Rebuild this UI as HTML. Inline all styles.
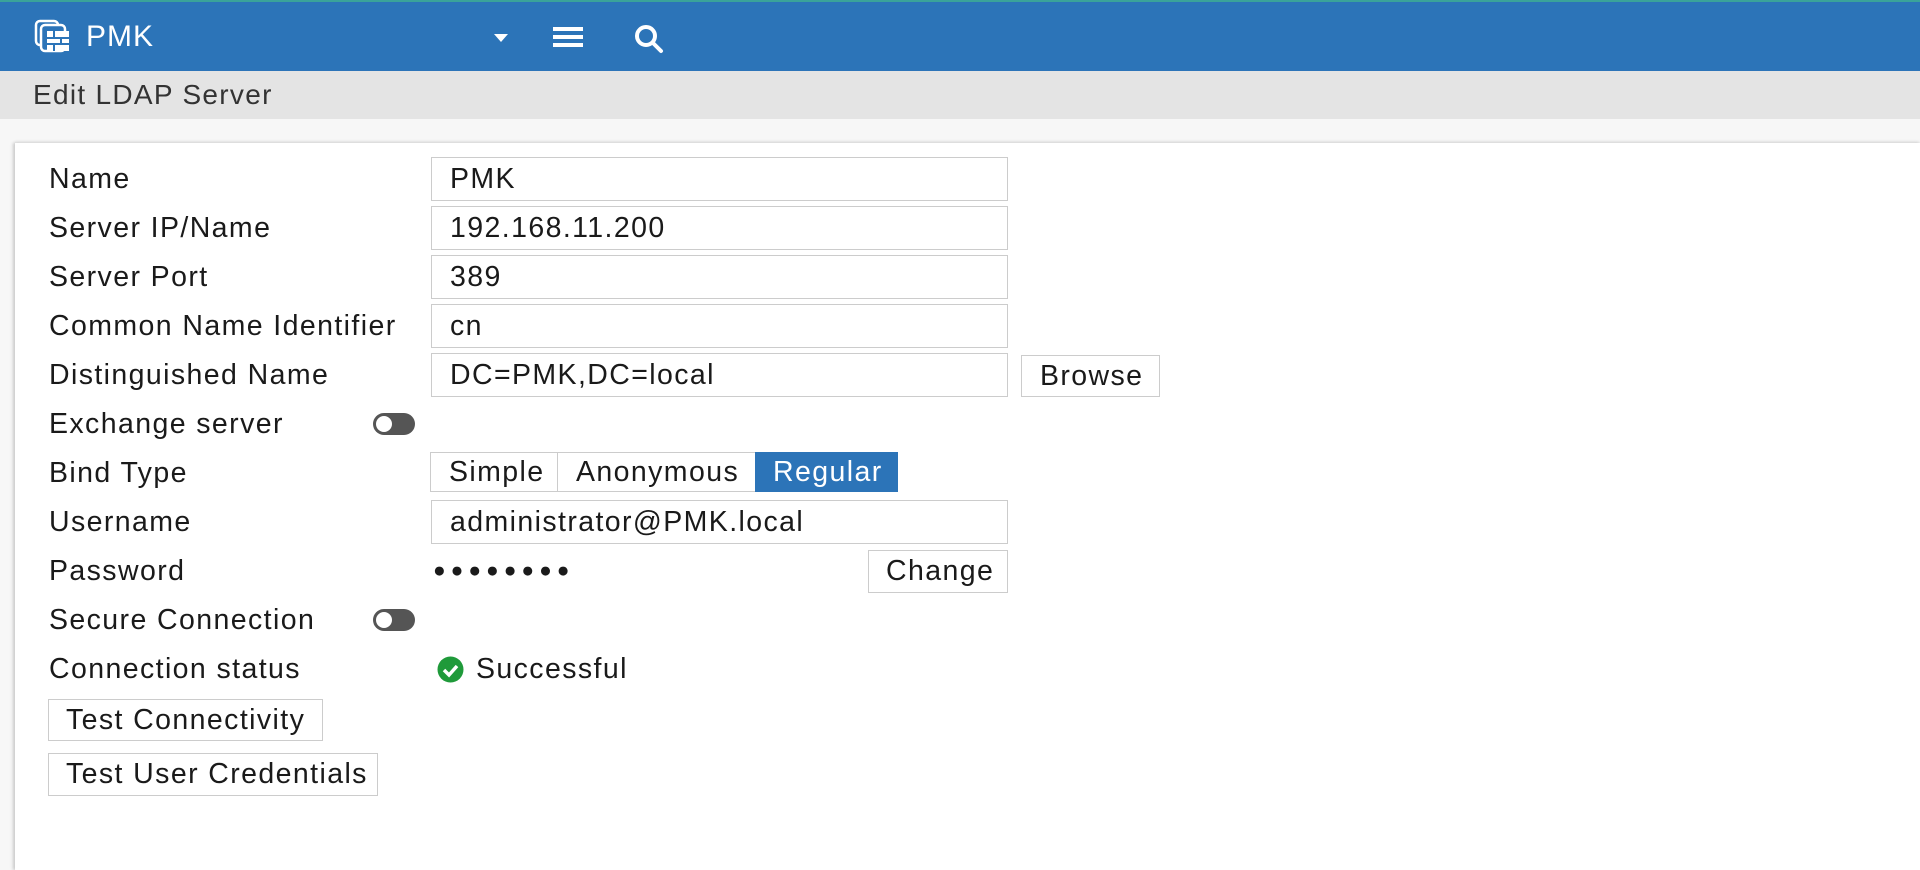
<!DOCTYPE html>
<html><head><meta charset="utf-8"><style>
*{box-sizing:border-box;margin:0;padding:0}
body{width:1920px;height:870px;overflow:hidden;background:#f7f7f7;font-family:"Liberation Sans",sans-serif;color:#1a1a1a;position:relative}
.top{position:absolute;left:0;top:0;width:1920px;height:71px;background:#2c74b8;border-top:2px solid #3aa39a}
.sub{position:absolute;left:0;top:71px;width:1920px;height:48px;background:#e4e4e4;font-size:28px;letter-spacing:1.3px;line-height:48px;padding-left:33px;color:#333}
.panel{position:absolute;left:15px;top:143px;width:1905px;height:727px;background:#fff;box-shadow:-2px 0 3px #ccc, 0 -1px 3px #ddd}
.a,.inp,.btn{font-size:28.5px;letter-spacing:1.4px}
.a{position:absolute;line-height:44px;white-space:nowrap}
.lbl{left:49px}
.inp{position:absolute;left:431px;width:577px;height:44px;border:1px solid #ccc;background:#fff;line-height:42px;padding-left:18px;white-space:nowrap}
.btn{position:absolute;border:1px solid #ccc;background:#fff;text-align:left;color:#1a1a1a;white-space:nowrap}
.tog{position:absolute;left:373px;width:42px;height:22px;border-radius:11px;background:#555}
.tog:after{content:"";position:absolute;left:3px;top:3px;width:16px;height:16px;border-radius:50%;background:#fff}
</style></head><body>
<div class="top">
<svg style="position:absolute;left:34px;top:17px" width="42" height="36" viewBox="0 0 42 36" fill="none" stroke="#fff" stroke-width="2.5"><rect x="2" y="2" width="22" height="24" rx="4"/><rect x="7" y="6" width="24" height="26" rx="4" fill="#2c74b8"/><rect x="13" y="12" width="22" height="20" fill="#fff" stroke="none"/><path d="M13 19h22M13 25h22M20 12v7M27 19v6M20 25v7" stroke="#2c74b8" stroke-width="2"/></svg>
<div style="position:absolute;left:86px;top:0;line-height:69px;font-size:30px;letter-spacing:1px;color:#fff">PMK</div>
<svg style="position:absolute;left:494px;top:32px" width="14" height="8"><path d="M0 0h14L7 8z" fill="#fff"/></svg>
<svg style="position:absolute;left:553px;top:24px" width="30" height="22"><path d="M0 3h30M0 11h30M0 19h30" stroke="#fff" stroke-width="4"/></svg>
<svg style="position:absolute;left:634px;top:22px" width="30" height="30" fill="none" stroke="#fff" stroke-width="4"><circle cx="12" cy="12" r="9"/><path d="M19 19l8 8" stroke-linecap="round"/></svg>
</div>
<div class="sub">Edit LDAP Server</div>
<div class="panel"></div>
<div class="a lbl" style="top:157px">Name</div>
<div class="a lbl" style="top:206px">Server IP/Name</div>
<div class="a lbl" style="top:255px">Server Port</div>
<div class="a lbl" style="top:304px">Common Name Identifier</div>
<div class="a lbl" style="top:353px">Distinguished Name</div>
<div class="a lbl" style="top:402px">Exchange server</div>
<div class="a lbl" style="top:451px">Bind Type</div>
<div class="a lbl" style="top:500px">Username</div>
<div class="a lbl" style="top:549px">Password</div>
<div class="a lbl" style="top:598px">Secure Connection</div>
<div class="a lbl" style="top:647px">Connection status</div>
<div class="inp" style="top:157px">PMK</div>
<div class="inp" style="top:206px">192.168.11.200</div>
<div class="inp" style="top:255px">389</div>
<div class="inp" style="top:304px">cn</div>
<div class="inp" style="top:353px">DC=PMK,DC=local</div>
<div class="btn" style="left:1021px;top:355px;width:139px;height:42px;line-height:40px;padding-left:18px">Browse</div>
<div class="tog" style="top:413px"></div>
<div class="btn" style="left:430px;top:452px;width:128px;height:40px;line-height:38px;padding-left:18px">Simple</div>
<div class="btn" style="left:557px;top:452px;width:199px;height:40px;line-height:38px;padding-left:18px">Anonymous</div>
<div class="btn" style="left:755px;top:452px;width:143px;height:40px;line-height:38px;padding-left:17px;background:#2c74b8;border-color:#2c74b8;color:#fff">Regular</div>
<div class="inp" style="top:500px">administrator@PMK.local</div>
<div class="a" style="left:433px;top:549px;letter-spacing:5px;font-size:21px">●●●●●●●●</div>
<div class="btn" style="left:868px;top:550px;width:140px;height:43px;line-height:41px;padding-left:17px">Change</div>
<div class="tog" style="top:609px"></div>
<svg style="position:absolute;left:437px;top:656px" width="27" height="27"><circle cx="13.5" cy="13.5" r="13" fill="#1f9a3a"/><path d="M7 14l5 5 8-9" stroke="#fff" stroke-width="3.5" fill="none"/></svg>
<div class="a" style="left:476px;top:647px">Successful</div>
<div class="btn" style="left:48px;top:699px;width:275px;height:42px;line-height:40px;padding-left:17px">Test Connectivity</div>
<div class="btn" style="left:48px;top:753px;width:330px;height:43px;line-height:41px;padding-left:17px">Test User Credentials</div>
</body></html>
